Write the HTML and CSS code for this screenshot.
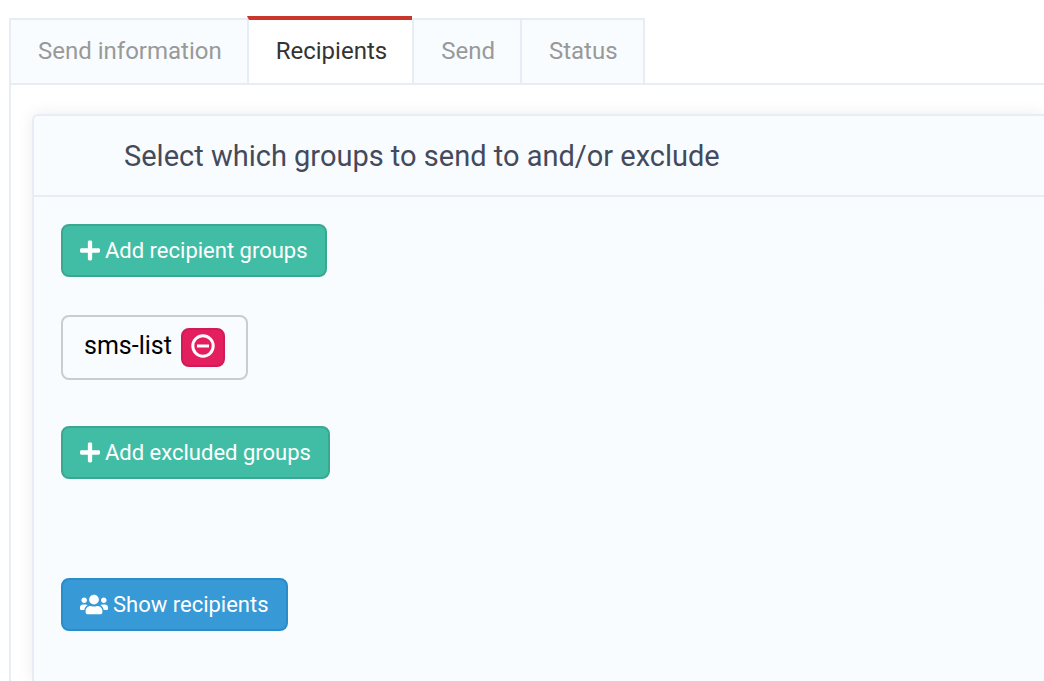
FILE: index.html
```
<!DOCTYPE html>
<html lang="en">
<head>
<meta charset="utf-8">
<meta name="viewport" content="width=device-width, initial-scale=1">
<title>Recipients</title>
<link rel="stylesheet" href="styles.css">
</head>
<body>
<nav class="tabs" aria-label="Message steps">
  <a class="tab" href="#information">Send information</a>
  <a class="tab tab-active" href="#recipients" aria-current="page">Recipients</a>
  <a class="tab" href="#send">Send</a>
  <a class="tab" href="#status">Status</a>
</nav>
<main class="tab-content">
  <section class="card">
    <header class="card-header">
      <h1 class="card-title">Select which groups to send to and/or exclude</h1>
    </header>
    <div class="card-body">
      <button class="btn btn-green" type="button">
        <svg class="icon-plus" viewBox="0 0 448 512" aria-hidden="true"><path d="M416 208H272V64c0-17.67-14.33-32-32-32h-32c-17.67 0-32 14.33-32 32v144H32c-17.67 0-32 14.33-32 32v32c0 17.67 14.33 32 32 32h144v144c0 17.67 14.33 32 32 32h32c17.67 0 32-14.33 32-32V304h144c17.67 0 32-14.33 32-32v-32c0-17.67-14.33-32-32-32z"/></svg>
        <span>Add recipient groups</span>
      </button>
      <hr class="divider">
      <div class="group">
        <span>sms-list</span>
        <button class="remove" type="button" aria-label="Remove sms-list">
          <svg class="icon-remove" viewBox="0 0 24 24" aria-hidden="true"><circle cx="12" cy="12" r="10.2"/><path d="M6 12h12"/></svg>
        </button>
      </div>
      <button class="btn btn-green" type="button">
        <svg class="icon-plus" viewBox="0 0 448 512" aria-hidden="true"><path d="M416 208H272V64c0-17.67-14.33-32-32-32h-32c-17.67 0-32 14.33-32 32v144H32c-17.67 0-32 14.33-32 32v32c0 17.67 14.33 32 32 32h144v144c0 17.67 14.33 32 32 32h32c17.67 0 32-14.33 32-32V304h144c17.67 0 32-14.33 32-32v-32c0-17.67-14.33-32-32-32z"/></svg>
        <span>Add excluded groups</span>
      </button>
      <button class="btn btn-blue" type="button">
        <svg class="icon-users" viewBox="0 0 640 512" aria-hidden="true"><path d="M96 224c35.3 0 64-28.7 64-64s-28.7-64-64-64-64 28.7-64 64 28.7 64 64 64zm448 0c35.3 0 64-28.7 64-64s-28.7-64-64-64-64 28.7-64 64 28.7 64 64 64zm32 32h-64c-17.6 0-33.5 7.1-45.1 18.6 40.3 22.1 68.9 62 75.1 109.4h66c17.7 0 32-14.3 32-32v-32c0-35.3-28.7-64-64-64zm-256 0c61.9 0 112-50.1 112-112S381.9 32 320 32 208 82.1 208 144s50.1 112 112 112zm76.8 32h-8.3c-20.8 10-43.9 16-68.5 16s-47.6-6-68.5-16h-8.3C179.6 288 128 339.6 128 403.2V432c0 26.5 21.5 48 48 48h288c26.5 0 48-21.5 48-48v-28.8c0-63.6-51.6-115.2-115.2-115.2zm-223.7-13.4C161.5 263.1 145.6 256 128 256H64c-35.3 0-64 28.7-64 64v32c0 17.7 14.3 32 32 32h65.9c6.3-47.4 34.9-87.3 75.2-109.4z"/></svg>
        <span>Show recipients</span>
      </button>
    </div>
  </section>
</main>
</body>
</html>
```
FILE: styles.css
```
* {
  box-sizing: border-box;
}

body {
  display: flex;
  flex-direction: column;
  min-height: 100vh;
  margin: 0;
  padding: 16px 0 0 9px;
  background: #fff;
  font-family: Roboto, "Liberation Sans", sans-serif;
  font-size: 24px;
  line-height: 32px;
}

.tabs {
  display: flex;
  align-items: flex-end;
}

.tab {
  padding: 15px 25px 16px 27px;
  border: 2px solid #e7ecf5;
  border-width: 2px 0 0 2px;
  background: #f8fcff;
  color: #999;
  text-decoration: none;
}

.tab:last-child {
  border-right-width: 2px;
}

.tab-active {
  border-top: 4px solid #c9372c;
  background: #fff;
  color: #333;
}

.tab-content {
  display: flex;
  flex: 1;
  padding: 29px 0 0 21px;
  border: 2px solid #e7ecf5;
  border-width: 2px 0 0 2px;
}

.card {
  flex: 1;
  border: 2px solid #e7ecf5;
  border-width: 2px 0 0 2px;
  border-radius: 6px 0 0 0;
  background: #f8fcff;
  box-shadow: 0 0 16px rgba(0, 0, 0, 0.08);
}

.card-header {
  padding: 20px 28px 19px 90px;
  border-bottom: 2px solid #e7ecf5;
}

.card-title {
  margin: 0;
  color: #444a5c;
  font-size: 29px;
  font-weight: 400;
  line-height: 40px;
}

.card-body {
  display: flex;
  flex-direction: column;
  align-items: flex-start;
  padding: 27px 0 48px 27px;
}

.btn {
  display: flex;
  align-items: center;
  gap: 5px;
  padding: 9px 17px;
  border: 2px solid;
  border-radius: 8px;
  color: #fff;
  font: inherit;
  font-size: 22px;
  line-height: 31px;
  cursor: pointer;
}

.btn-green {
  border-color: #3aa891;
  background: #42bda5;
}

.btn-blue {
  margin-top: 99px;
  border-color: #298dc9;
  background: #3799d5;
}

.btn svg {
  flex: none;
  fill: currentColor;
}

.icon-plus {
  width: 20px;
  height: 23px;
}

.icon-users {
  width: 28px;
  height: 23px;
}

.divider {
  align-self: stretch;
  height: 2px;
  margin: 18px 0;
  border: 0;
  background: #f9fafc;
}

.group {
  display: flex;
  align-items: flex-start;
  gap: 9px;
  margin-bottom: 46px;
  padding: 11px 21px;
  border: 2px solid #ccc;
  border-radius: 8px;
  color: #000;
  font-size: 25px;
  line-height: 36px;
}

.remove {
  display: flex;
  padding: 4px 8px 7px;
  border: 2px solid #cf1c55;
  border-radius: 8px;
  background: #e41f5f;
  color: #fff;
  cursor: pointer;
}

.icon-remove {
  width: 24px;
  height: 24px;
  fill: none;
  stroke: currentColor;
  stroke-width: 3;
}
```
